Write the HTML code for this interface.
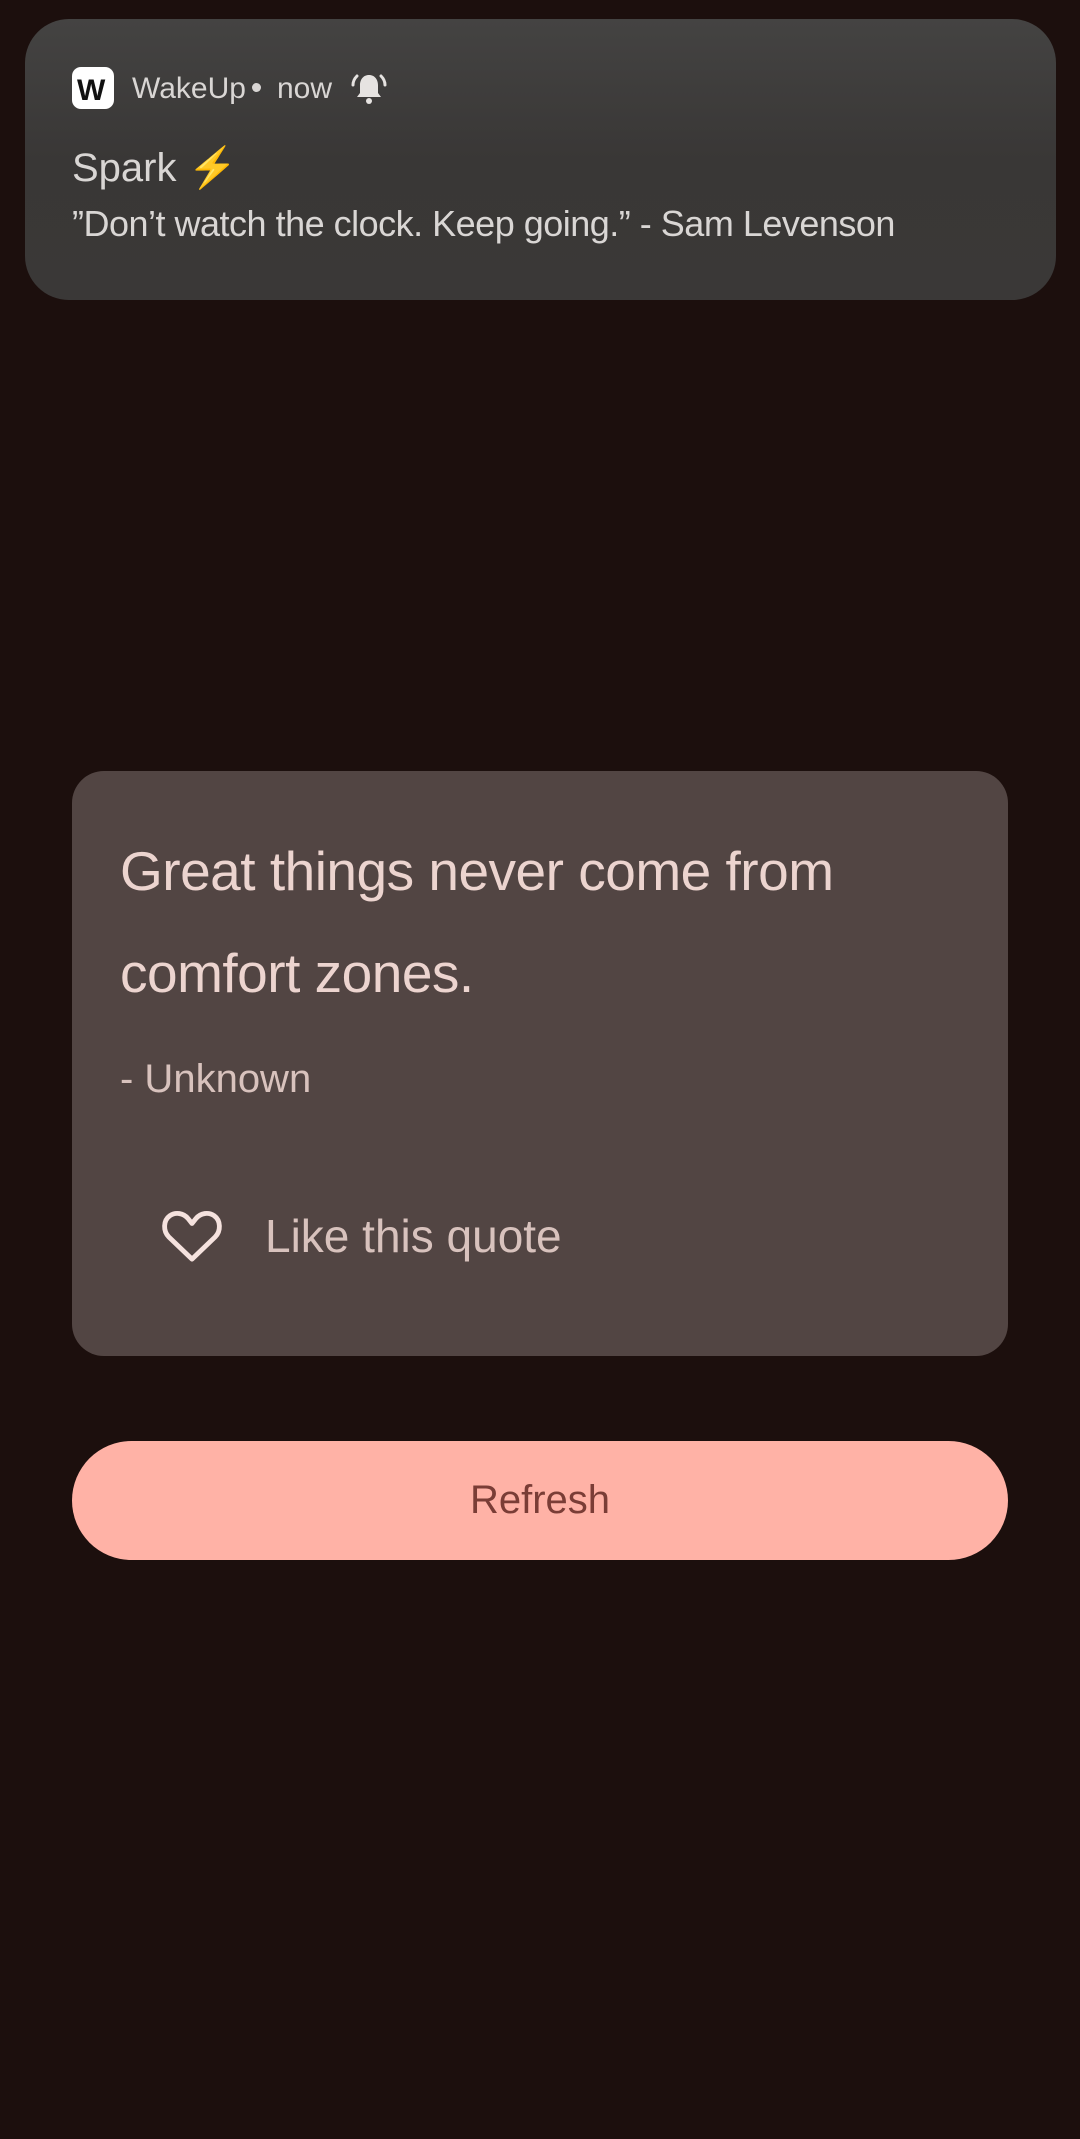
<!DOCTYPE html>
<html><head><meta charset="utf-8"><style>
html,body{margin:0;padding:0;}
body{width:1080px;height:2139px;background:#1c0f0d;position:relative;overflow:hidden;font-family:"Liberation Sans",sans-serif;}
.notif{position:absolute;left:25px;top:19px;width:1031px;height:281px;border-radius:44px;background:linear-gradient(#444342,#393736 50%,#3a3837);}
.t{position:absolute;white-space:nowrap;line-height:1;}
.card{position:absolute;left:72px;top:771px;width:936px;height:585px;border-radius:32px;background:#524543;}
.btn{position:absolute;left:72px;top:1441px;width:936px;height:119px;border-radius:60px;background:#ffb2a6;}
</style></head><body>
<div class="notif"></div>
<div style="position:absolute;left:72px;top:67px;width:42px;height:42px;border-radius:9px;background:#fff;"></div>
<div class="t" style="left:77px;top:74px;font:bold 30px 'Liberation Sans',sans-serif;color:#111;letter-spacing:-3px;">W</div>
<div class="t" style="left:132px;top:74px;font-size:30px;color:#d9d6d4;">WakeUp</div>
<div style="position:absolute;left:252px;top:83px;width:9px;height:9px;border-radius:50%;background:#d9d6d4;"></div>
<div class="t" style="left:277px;top:74px;font-size:30px;color:#d9d6d4;">now</div>
<svg style="position:absolute;left:350px;top:70px" width="38" height="38" viewBox="0 0 38 38"><path d="M19 5c-6 0-9 5-9 10v8l-3 4h24l-3-4v-8c0-5-3-10-9-10z" fill="#e6e3e1"/><circle cx="19" cy="31" r="3" fill="#e6e3e1"/><path d="M7 6C4 9 3 12 3 15M31 6c3 3 4 6 4 9" stroke="#e6e3e1" stroke-width="3" fill="none" stroke-linecap="round"/></svg>
<div class="t" style="left:72px;top:148px;font-size:40px;color:#d9d6d4;">Spark <span style="color:#f2b73a">⚡</span></div>
<div class="t" style="left:72px;top:206px;font-size:36px;color:#d9d6d4;letter-spacing:-0.5px;">”Don’t watch the clock. Keep going.” - Sam Levenson</div>

<div class="card"></div>
<div class="t" style="left:120px;top:844px;font-size:55px;color:#ecd4cf;letter-spacing:-0.5px;">Great things never come from</div>
<div class="t" style="left:120px;top:946px;font-size:55px;color:#ecd4cf;letter-spacing:-0.5px;">comfort zones.</div>
<div class="t" style="left:120px;top:1059px;font-size:40px;color:#d8c2bd;">- Unknown</div>
<svg style="position:absolute;left:161px;top:1208px" width="62" height="56" viewBox="0 0 64 58"><path d="M32 53L8 30C2 24 2 13 9 8c6-4 14-3 19 3l4 5 4-5c5-6 13-7 19-3 7 5 7 16 1 22z" fill="none" stroke="#f5e2de" stroke-width="5" stroke-linejoin="round"/></svg>
<div class="t" style="left:265px;top:1213px;font-size:46px;color:#d8c2bd;">Like this quote</div>

<div class="btn"></div>
<div class="t" style="left:0;width:1080px;text-align:center;top:1480px;font-size:40px;color:#7a3d36;">Refresh</div>
</body></html>
